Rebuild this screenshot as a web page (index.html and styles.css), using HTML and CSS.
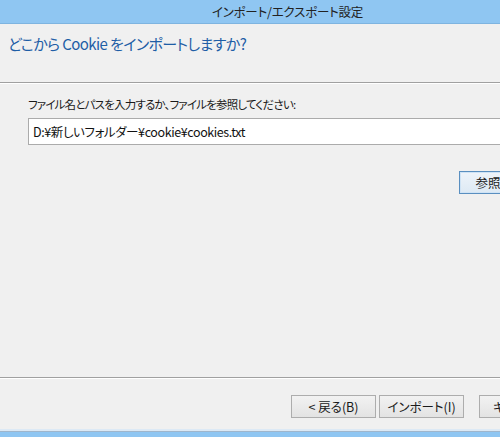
FILE: index.html
```html
<!DOCTYPE html>
<html lang="ja">
<head>
    <meta charset="UTF-8">
    <meta name="viewport" content="width=device-width, initial-scale=1.0">
    <title>インポート/エクスポート設定</title>
    <link rel="stylesheet" href="styles.css">
</head>
<body>
    <div class="dialog">
        <div class="titlebar">インポート/エクスポート設定</div>

        <div class="header">
            <h1>どこから Cookie をインポートしますか?</h1>
        </div>

        <div class="content">
            <label class="field-label" for="filePath">ファイル名とパスを入力するか、ファイルを参照してください:</label>
            <input id="filePath" class="path-input" type="text" value="D:¥新しいフォルダー¥cookie¥cookies.txt">
            <div class="browse-row">
                <button class="btn btn-default">参照(R)...</button>
            </div>
        </div>

        <div class="footer">
            <button class="btn">&lt; 戻る(B)</button>
            <button class="btn">インポート(I)</button>
            <button class="btn btn-cancel">キャンセル</button>
        </div>

        <div class="frame-bottom"></div>
    </div>
</body>
</html>
```

FILE: styles.css
```css
body {
    margin: 0;
    overflow: hidden;
    background: #f0f0f0;
    font-family: 'Noto Sans CJK JP', 'Noto Sans', sans-serif;
    font-feature-settings: "palt";
    color: #1a1a1a;
}

.dialog {
    width: 575px;
    height: 437px;
    display: flex;
    flex-direction: column;
    background: #f0f0f0;
}

.titlebar {
    height: 24px;
    line-height: 24px;
    background: #8fc6f2;
    border-bottom: 1px solid #7eb4e0;
    box-sizing: border-box;
    text-align: center;
    font-size: 12.5px;
    letter-spacing: -0.2px;
    color: #222;
}

.header {
    height: 59px;
    box-sizing: border-box;
    padding: 10px 8px 0;
    border-bottom: 1px solid #a0a0a0;
    box-shadow: 0 1px 0 #ffffff;
}

.header h1 {
    margin: 0;
    font-size: 15px;
    font-weight: normal;
    letter-spacing: -0.6px;
    line-height: 20px;
    color: #1f5ea6;
}

.content {
    flex: 1;
    padding: 13px 28px 0;
    display: flex;
    flex-direction: column;
}

.field-label {
    font-size: 11.5px;
    letter-spacing: -0.8px;
    line-height: 16px;
    color: #1a1a1a;
}

.path-input {
    margin-top: 6px;
    height: 27px;
    box-sizing: border-box;
    border: 1px solid #ababab;
    background: #fff;
    padding: 0 4px;
    font-family: inherit;
    font-feature-settings: "palt";
    font-size: 12.5px;
    letter-spacing: -0.4px;
    color: #111;
    outline: none;
}

.browse-row {
    margin-top: 26px;
    display: flex;
    justify-content: flex-end;
    padding-right: 3px;
}

.btn {
    width: 85px;
    height: 23px;
    box-sizing: border-box;
    border: 1px solid #adadad;
    background: linear-gradient(#f2f2f2, #e3e3e3);
    font-family: inherit;
    font-feature-settings: "palt";
    font-size: 12.5px;
    color: #1a1a1a;
    padding: 0;
}

.btn-default {
    border-color: #5a8fc0;
    background: linear-gradient(#eef4fa, #dde9f4);
    box-shadow: inset 0 0 0 1px #cfe3f5;
}

.footer {
    height: 52px;
    box-sizing: border-box;
    border-top: 1px solid #a0a0a0;
    box-shadow: inset 0 1px 0 #ffffff;
    display: flex;
    justify-content: flex-end;
    align-items: flex-start;
    gap: 3px;
    padding: 17px 11px 0 0;
}

.btn-cancel {
    margin-left: 12px;
}

.frame-bottom {
    height: 8px;
    box-sizing: border-box;
    border-top: 2px solid #dce9f5;
    background: #8fc6f2;
    box-shadow: inset 0 1px 0 #9fb6cc;
}
```
